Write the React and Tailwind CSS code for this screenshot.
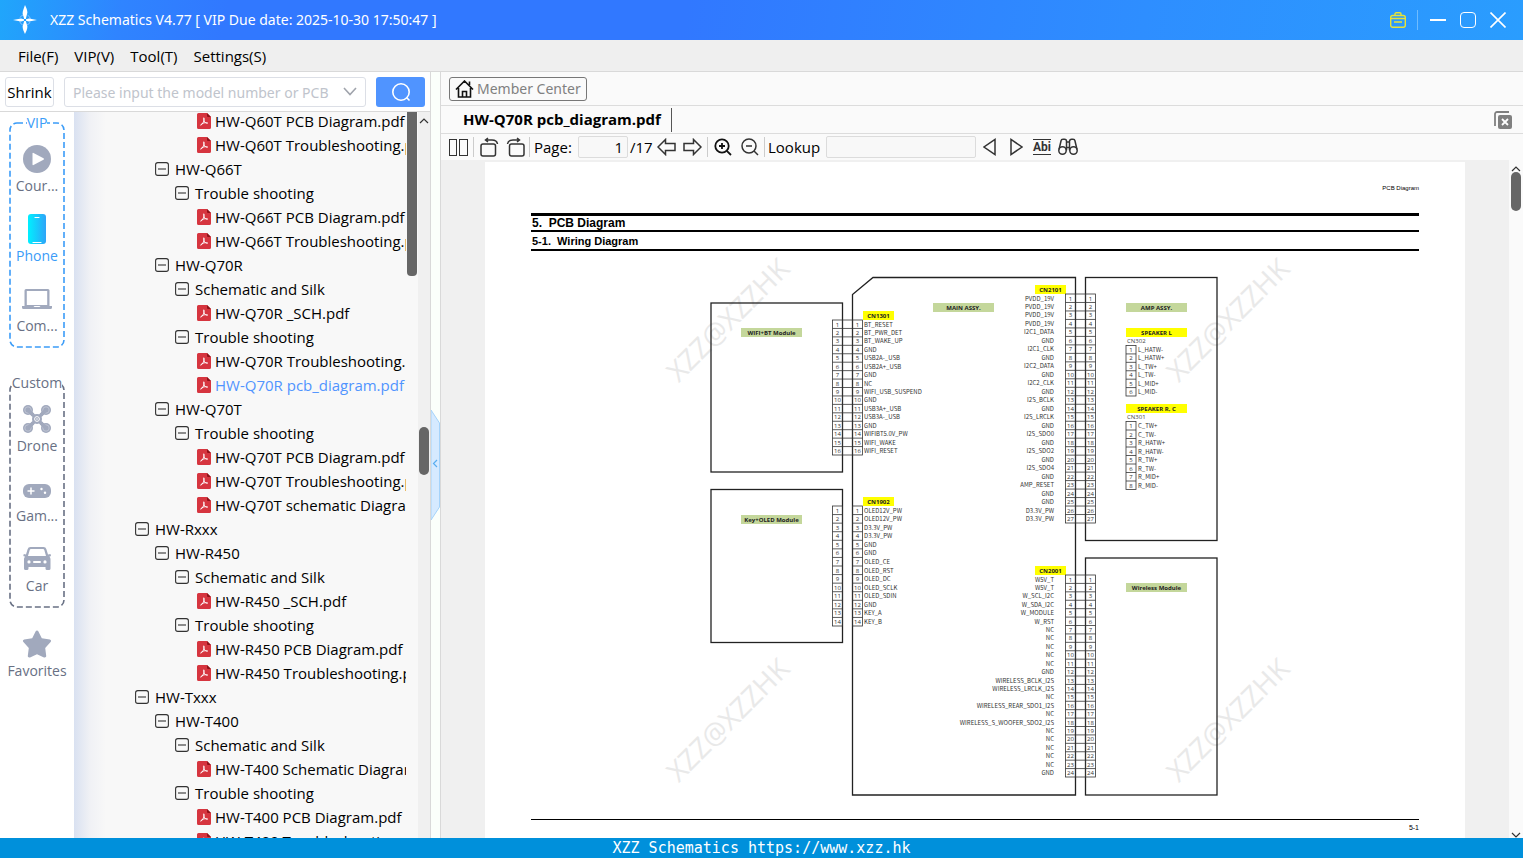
import { useState } from 'react';

const TREE = [
  { depth: 3, name: 'HW-Q60T PCB Diagram.pdf', file: true },
  { depth: 3, name: 'HW-Q60T Troubleshooting.pdf', file: true },
  { depth: 1, name: 'HW-Q66T' },
  { depth: 2, name: 'Trouble shooting' },
  { depth: 3, name: 'HW-Q66T PCB Diagram.pdf', file: true },
  { depth: 3, name: 'HW-Q66T Troubleshooting.pdf', file: true },
  { depth: 1, name: 'HW-Q70R' },
  { depth: 2, name: 'Schematic and Silk' },
  { depth: 3, name: 'HW-Q70R _SCH.pdf', file: true },
  { depth: 2, name: 'Trouble shooting' },
  { depth: 3, name: 'HW-Q70R Troubleshooting.pdf', file: true },
  { depth: 3, name: 'HW-Q70R pcb_diagram.pdf', file: true },
  { depth: 1, name: 'HW-Q70T' },
  { depth: 2, name: 'Trouble shooting' },
  { depth: 3, name: 'HW-Q70T PCB Diagram.pdf', file: true },
  { depth: 3, name: 'HW-Q70T Troubleshooting.pdf', file: true },
  { depth: 3, name: 'HW-Q70T schematic Diagram.pdf', file: true },
  { depth: 0, name: 'HW-Rxxx' },
  { depth: 1, name: 'HW-R450' },
  { depth: 2, name: 'Schematic and Silk' },
  { depth: 3, name: 'HW-R450 _SCH.pdf', file: true },
  { depth: 2, name: 'Trouble shooting' },
  { depth: 3, name: 'HW-R450 PCB Diagram.pdf', file: true },
  { depth: 3, name: 'HW-R450 Troubleshooting.pdf', file: true },
  { depth: 0, name: 'HW-Txxx' },
  { depth: 1, name: 'HW-T400' },
  { depth: 2, name: 'Schematic and Silk' },
  { depth: 3, name: 'HW-T400 Schematic Diagram.pdf', file: true },
  { depth: 2, name: 'Trouble shooting' },
  { depth: 3, name: 'HW-T400 PCB Diagram.pdf', file: true },
  { depth: 3, name: 'HW-T400 Troubleshooting.pdf', file: true },
];

const INDENT = ['pl-[61px]', 'pl-[81px]', 'pl-[101px]', 'pl-[123px]'];

const CN1301 = ['BT_RESET', 'BT_PWR_DET', 'BT_WAKE_UP', 'GND', 'USB2A-_USB', 'USB2A+_USB', 'GND', 'NC', 'WIFI_USB_SUSPEND', 'GND', 'USB3A+_USB', 'USB3A-_USB', 'GND', 'WIFIBT5.0V_PW', 'WIFI_WAKE', 'WIFI_RESET'];
const CN1902 = ['OLED12V_PW', 'OLED12V_PW', 'D3.3V_PW', 'D3.3V_PW', 'GND', 'GND', 'OLED_CE', 'OLED_RST', 'OLED_DC', 'OLED_SCLK', 'OLED_SDIN', 'GND', 'KEY_A', 'KEY_B'];
const CN2101 = ['PVDD_19V', 'PVDD_19V', 'PVDD_19V', 'PVDD_19V', 'I2C1_DATA', 'GND', 'I2C1_CLK', 'GND', 'I2C2_DATA', 'GND', 'I2C2_CLK', 'GND', 'I2S_BCLK', 'GND', 'I2S_LRCLK', 'GND', 'I2S_SDO0', 'GND', 'I2S_SDO2', 'GND', 'I2S_SDO4', 'GND', 'AMP_RESET', 'GND', 'GND', 'D3.3V_PW', 'D3.3V_PW'];
const CN2001 = ['W5V_T', 'W5V_T', 'W_SCL_I2C', 'W_SDA_I2C', 'W_MODULE', 'W_RST', 'NC', 'NC', 'NC', 'NC', 'NC', 'GND', 'WIRELESS_BCLK_I2S', 'WIRELESS_LRCLK_I2S', 'NC', 'WIRELESS_REAR_SDO1_I2S', 'NC', 'WIRELESS_S_WOOFER_SDO2_I2S', 'NC', 'NC', 'NC', 'NC', 'NC', 'GND'];
const CN302 = ['L_HATW-', 'L_HATW+', 'L_TW+', 'L_TW-', 'L_MID+', 'L_MID-'];
const CN301 = ['C_TW+', 'C_TW-', 'R_HATW+', 'R_HATW-', 'R_TW+', 'R_TW-', 'R_MID+', 'R_MID-'];

function LogoIcon() {
  return (
    <svg width="24" height="30" viewBox="0 0 24 30" fill="#fff">
      <circle cx="12" cy="15" r="5.500" fill="none" stroke="#8cc4ff" strokeWidth="1" strokeDasharray="5 3.640" strokeDashoffset="-2" />
      <path d="M12 0c1 2 2.400 5 2.400 7.500L12.800 14h-1.600L9.600 8.500C9.600 6 11 3 12 0zM12 29c1-2 2.400-5 2.400-7.500L12.800 16h-1.600l-1.600 5.500C9.600 24 11 27 12 29z" />
      <path d="M0 15l8-1.500 3 .8v1.400l-3 .8zM24 15l-8-1.500-3 .8v1.400l3 .8z" />
    </svg>
  );
}

function PdfIcon() {
  return (
    <svg className="shrink-0" width="14" height="16" viewBox="0 0 14 16">
      <path d="M1.500 0H10l4 4v10.500a1.500 1.500 0 0 1-1.500 1.500h-11A1.500 1.500 0 0 1 0 14.500v-13A1.500 1.500 0 0 1 1.500 0z" fill="#d6353f" />
      <path d="M10 0l4 4h-3a1 1 0 0 1-1-1z" fill="#8e1219" />
      <path d="M6.800 4.800c.5 0 .5 1.800 0 3.200-.9 2.300-2.400 4.400-3.200 4.200.3-1 1.800-1.900 3.400-2.300 1.700-.4 3.400-.4 3.700.2-.8.5-2.200 0-3-1.200-1.100-1.400-1.500-4.100-.9-4.100z" fill="none" stroke="#fff" strokeWidth=".9" />
    </svg>
  );
}

function MinusBox() {
  return (
    <svg className="shrink-0" width="14" height="14" viewBox="0 0 14 14" fill="none" stroke="#333" strokeWidth="1.100">
      <rect x=".6" y=".6" width="12.800" height="12.800" rx="2.200" />
      <path d="M3 7h8" />
    </svg>
  );
}

function CoursesIcon() {
  return (
    <svg width="28" height="28" viewBox="0 0 28 28">
      <circle cx="14" cy="14" r="14" fill="#a1a9bd" />
      <path d="M9.500 8.500v11a.7.7 0 0 0 1 .6l10-5.400a.8.8 0 0 0 0-1.400l-10-5.400a.7.7 0 0 0-1 .6z" fill="#fff" />
    </svg>
  );
}

function PhoneIcon() {
  return (
    <svg width="18" height="30" viewBox="0 0 18 30">
      <defs>
        <linearGradient id="phone" x1="0" y1="0" x2="1" y2="0">
          <stop offset="0" stopColor="#00f0ff" />
          <stop offset="1" stopColor="#2ea4f8" />
        </linearGradient>
      </defs>
      <rect width="18" height="30" rx="3" fill="url(#phone)" />
      <path d="M7 3.500h4M5 28.500h8" stroke="#fff" strokeWidth="1.200" strokeLinecap="round" />
    </svg>
  );
}

function ComputerIcon() {
  return (
    <svg width="30" height="22" viewBox="0 0 30 22" fill="#a1a9bd">
      <path fillRule="evenodd" d="M4 1h22a1.500 1.500 0 0 1 1.500 1.500V18h-25V2.500A1.500 1.500 0 0 1 4 1zM4.800 3v14h20.400V3z" />
      <path d="M0 18h11.500l1 1h5l1-1H30v1.500a1.500 1.500 0 0 1-1.500 1.500h-27A1.500 1.500 0 0 1 0 19.500z" />
    </svg>
  );
}

function DroneIcon() {
  return (
    <svg width="28" height="28" viewBox="0 0 28 28">
      <path d="M5.500 5.500l17 17M22.500 5.500l-17 17" stroke="#a1a9bd" strokeWidth="3.400" />
      <circle cx="14" cy="14" r="5" fill="#a1a9bd" />
      {[[5, 5], [23, 5], [5, 23], [23, 23]].map(([x, y]) => (
        <g key={`${x}-${y}`}>
          <circle cx={x} cy={y} r="5" fill="#a1a9bd" />
          <circle cx={x} cy={y} r="3.200" fill="none" stroke="#c5cad8" strokeWidth=".8" />
        </g>
      ))}
      <path d="M5 5l5 5M23 5l-5 5M5 23l5-5M23 23l-5-5" stroke="#a1a9bd" strokeWidth="3.400" />
      <circle cx="14" cy="14" r="2.400" fill="none" stroke="#fff" strokeWidth="1" />
      <circle cx="14" cy="14" r=".8" fill="#fff" />
    </svg>
  );
}

function GameIcon() {
  return (
    <svg width="28" height="18" viewBox="0 -4 28 18">
      <rect width="28" height="14" rx="6" fill="#a1a9bd" />
      <path d="M8 3.500v7M4.500 7h7" stroke="#fff" strokeWidth="1.500" />
      <circle cx="18.500" cy="5" r="1.200" fill="#fff" />
      <circle cx="22" cy="8.800" r="1.200" fill="#fff" />
    </svg>
  );
}

function CarIcon() {
  return (
    <svg width="28" height="23" viewBox="0 0 28 23" fill="#a1a9bd">
      <path
        fillRule="evenodd"
        d="M7.500 0h13a3 3 0 0 1 2.900 2.200L25 7.500l2.500-.5.5 2-1.700.8c1 .8 1.200 1.700 1.200 2.700v9a1.500 1.500 0 0 1-1.500 1.500h-2a1.500 1.500 0 0 1-1.500-1.500V20h-17v1.500A1.500 1.500 0 0 1 4 23H2.500A1.500 1.500 0 0 1 1 21.500v-9c0-1 .2-1.900 1.200-2.700L.3 9l.5-2L3 7.500l1.600-5.300A3 3 0 0 1 7.500 0zM8 2a1.400 1.400 0 0 0-1.300 1L5 9h18l-1.700-6A1.400 1.400 0 0 0 20 2zM6 13.300a1.600 1.600 0 1 0 0 3.200 1.600 1.600 0 0 0 0-3.200zM22 13.300a1.600 1.600 0 1 0 0 3.200 1.600 1.600 0 0 0 0-3.200zM11 14a1 1 0 0 0 0 2h6a1 1 0 0 0 0-2z"
      />
    </svg>
  );
}

function StarIcon() {
  return (
    <svg width="30" height="30" viewBox="0 -1 30 30" fill="#a1a9bd">
      <path d="M13.700 1.200a1.500 1.500 0 0 1 2.600 0l3.500 7 8 1.400c1.300.3 1.700 1.600.8 2.500l-5.400 6 1 7.700c.2 1.300-1 2.100-2.200 1.600L15 24.200l-7 3.200c-1.200.5-2.400-.3-2.200-1.600l1-7.700-5.400-6c-.9-.9-.5-2.200.8-2.500l8-1.400z" />
    </svg>
  );
}

function NavItem({ icon, label, active, onClick }) {
  return (
    <button type="button" onClick={onClick} className="flex h-[70px] w-full flex-col items-center">
      <span className="flex h-10 items-center justify-center pt-px">{icon}</span>
      <span className={`text-[14px] leading-4 whitespace-nowrap ${active ? 'text-[#3b9cf8]' : 'text-[#687084]'}`}>{label}</span>
    </button>
  );
}

function NavGroup({ title, color, className, children }) {
  return (
    <section className={`relative mx-2 pt-4 ${className}`}>
      <svg className="absolute inset-0 h-full w-full overflow-visible" fill="none">
        <rect x="2" y="1" width="54" height="224" rx="7" stroke={color} strokeWidth="1.600" strokeDasharray="6 3" />
      </svg>
      <h2 className="absolute inset-x-0 -top-2 flex justify-center text-[14px] leading-[18px]" style={{ color }}>
        <span className="bg-white">{title}</span>
      </h2>
      <div className="relative">{children}</div>
    </section>
  );
}

function Grid({ x, top, bottom, n, w = 10 }) {
  const h = (bottom - top) / n;
  return (
    <g>
      <g stroke="#333" strokeWidth=".8" fill="none">
        <rect x={x} y={top} width={w} height={bottom - top} />
        {Array.from({ length: n - 1 }, (_, i) => (
          <path key={i} d={`M${x} ${top + h * (i + 1)}h${w}`} />
        ))}
      </g>
      {Array.from({ length: n }, (_, i) => (
        <text key={i} x={x + w / 2} y={top + h * i + 6.5} textAnchor="middle" fill="#333">{i + 1}</text>
      ))}
    </g>
  );
}

// horizontal wires between two facing connectors
function Wires({ x, w, top, bottom, n }) {
  const h = (bottom - top) / n;
  return (
    <g stroke="#333" strokeWidth=".8">
      {Array.from({ length: n + 1 }, (_, i) => (
        <path key={i} d={`M${x} ${top + h * i}h${w}`} />
      ))}
    </g>
  );
}

function Pins({ x, top, bottom, names, end }) {
  const h = (bottom - top) / names.length;
  return (
    <g fontFamily='"Noto Sans CJK SC", sans-serif' fill="#333">
      {names.map((name, i) => (
        <text key={i} x={x} y={top + h * i + 6.5} textAnchor={end ? 'end' : 'start'}>{name}</text>
      ))}
    </g>
  );
}

function Tag({ x, y, w, color, children }) {
  return (
    <g>
      <rect x={x} y={y} width={w} height="9" fill={color} />
      <text x={x + w / 2} y={y + 6.5} textAnchor="middle" fontWeight="700" fill="#222">{children}</text>
    </g>
  );
}

function WiringDiagram() {
  return (
    <svg className="block w-full" viewBox="531 251 888 568" fontSize="6" fontFamily='"Open Sans", sans-serif' role="img" aria-label="Wiring Diagram">
      <g fill="#e9e9e9" fontSize="28" fontFamily='"Open Sans", sans-serif' textAnchor="middle">
        {[[735, 327], [1235, 327], [735, 727], [1235, 727]].map(([x, y]) => (
          <text key={`${x}-${y}`} transform={`translate(${x} ${y}) rotate(-45)`}>XZZ@XZZHK</text>
        ))}
      </g>

      <g fill="none" stroke="#222" strokeWidth="1.300">
        <rect x="711" y="303" width="131.500" height="169" />
        <rect x="711" y="489.500" width="131.500" height="153" />
        <path d="M873 277.500h202.500V795h-223V294.500z" />
        <rect x="1085.500" y="277.500" width="131.500" height="263" />
        <rect x="1085.500" y="558" width="131.500" height="237" />
      </g>

      <Tag x={741} y={328} w={61} color="#c4d79b">WIFI+BT Module</Tag>
      <Tag x={741} y={515} w={61} color="#c4d79b">Key+OLED Module</Tag>
      <Tag x={933} y={303} w={61} color="#c4d79b">MAIN ASSY.</Tag>
      <Tag x={1126} y={303} w={61} color="#c4d79b">AMP ASSY.</Tag>
      <Tag x={1126} y={583} w={61} color="#c4d79b">Wireless Module</Tag>
      <Tag x={1126} y={328} w={61} color="#ff0">SPEAKER L</Tag>
      <Tag x={1126} y={404} w={61} color="#ff0">SPEAKER R, C</Tag>
      <Tag x={863} y={311} w={31} color="#ff0">CN1301</Tag>
      <Tag x={863} y={497} w={31} color="#ff0">CN1902</Tag>
      <Tag x={1035} y={285} w={31} color="#ff0">CN2101</Tag>
      <Tag x={1035} y={566} w={31} color="#ff0">CN2001</Tag>

      <Grid x={832.500} top={320} bottom={455} n={16} />
      <Wires x={842.500} w={10} top={320} bottom={455} n={16} />
      <Grid x={852.500} top={320} bottom={455} n={16} />
      <Pins x={864} top={320} bottom={455} names={CN1301} />

      <Grid x={832.500} top={506} bottom={626} n={14} />
      <Grid x={852.500} top={506} bottom={626} n={14} />
      <Pins x={864} top={506} bottom={626} names={CN1902} />

      <Grid x={1065.500} top={294} bottom={523} n={27} />
      <Wires x={1075.500} w={10} top={294} bottom={523} n={27} />
      <Grid x={1085.500} top={294} bottom={523} n={27} />
      <Pins x={1054} top={294} bottom={523} names={CN2101} end />

      <Grid x={1065.500} top={575} bottom={777} n={24} />
      <Wires x={1075.500} w={10} top={575} bottom={777} n={24} />
      <Grid x={1085.500} top={575} bottom={777} n={24} />
      <Pins x={1054} top={575} bottom={777} names={CN2001} end />

      <text x="1127" y="343" fill="#444">CN302</text>
      <Grid x={1126} top={345.500} bottom={396} n={6} />
      <Pins x={1138} top={345.500} bottom={396} names={CN302} />
      <text x="1127" y="419" fill="#444">CN301</text>
      <Grid x={1126} top={421.500} bottom={489.500} n={8} />
      <Pins x={1138} top={421.500} bottom={489.500} names={CN301} />
    </svg>
  );
}

function TitleBar() {
  return (
    <header className="flex h-10 shrink-0 items-center bg-[linear-gradient(100deg,#20a6fb_0%,#2f84ff_8%,#3178ff_15%,#3178ff_45%,#2e8eff_75%,#2a9dfe_100%)] pr-[17px] pl-[13px] text-white">
      <LogoIcon />
      <h1 className="ml-[13px] font-['Noto_Sans',sans-serif] text-[14px] leading-5 whitespace-pre">XZZ Schematics V4.77 [ VIP Due date: 2025-10-30 17:50:47 ]</h1>
      <div className="ml-auto flex items-center">
        <button type="button" aria-label="Toolbox">
          <svg width="16" height="16" viewBox="0 0 16 16" fill="none" stroke="#e8e337" strokeWidth="1.400">
            <rect x=".7" y="3.500" width="14.600" height="11.800" rx="2" />
            <path d="M5 3.500V2a1.200 1.200 0 0 1 1.200-1.200h3.600A1.200 1.200 0 0 1 11 2v1.500M1 6.500h14M4 10h8" />
          </svg>
        </button>
        <span className="mx-[11px] h-5 w-px bg-[#6fbcff]" />
        <button type="button" aria-label="Minimize" className="mx-px flex h-4 w-4 items-center">
          <span className="h-[2px] w-full bg-white" />
        </button>
        <button type="button" aria-label="Maximize" className="ml-[13px] h-4 w-4 rounded-[4px] border border-white" />
        <button type="button" aria-label="Close" className="ml-[14px]">
          <svg width="16" height="16" viewBox="0 0 16 16" stroke="#fff" strokeWidth="1.600"><path d="M.5.5l15 15M15.500.5l-15 15" /></svg>
        </button>
      </div>
    </header>
  );
}

function Chevron({ up }) {
  return (
    <svg width="10" height="6" viewBox="0 0 10 6" fill="none" stroke="#333" strokeWidth="1.200">
      <path d={up ? 'M1 5l4-4 4 4' : 'M1 1l4 4 4-4'} />
    </svg>
  );
}

function Tree({ selected, onSelect }) {
  return (
    <ul className="-mt-[3px] min-w-0 flex-1 overflow-hidden">
      {TREE.map((node, i) => {
        const active = node.name === selected;
        return (
          <li key={i} className={`h-6 ${INDENT[node.depth]}`}>
            <button
              type="button"
              onClick={() => node.file && onSelect(node.name)}
              className={`flex h-6 items-center text-[15px] leading-6 whitespace-nowrap ${node.file ? 'gap-1' : 'gap-[6px]'} ${active ? 'text-[#5094ff]' : 'text-black'}`}
            >
              {node.file ? <PdfIcon /> : <MinusBox />}
              {node.name}
            </button>
          </li>
        );
      })}
    </ul>
  );
}

function Toolbar() {
  const [page, setPage] = useState('1');
  const [lookup, setLookup] = useState('');
  const stroke = { fill: 'none', stroke: '#333', strokeWidth: 1.5 };
  return (
    <div className="flex h-[26px] shrink-0 items-center bg-[#fafafa] pl-2 text-[15px] leading-6">
      <button type="button" aria-label="Two pages">
        <svg width="19" height="18" viewBox="0 0 19 18" {...stroke} strokeWidth="1"><rect x=".5" y="1.500" width="7" height="16" /><rect x="10.500" y="1.500" width="8" height="16" /></svg>
      </button>
      <span className="mx-[5px] h-5 w-px bg-[#ccc]" />
      <button type="button" aria-label="Rotate left" className="ml-px">
        <svg width="19" height="20" viewBox="0 0 19 20" {...stroke}><rect x="1" y="7" width="14.500" height="12" rx="2" /><path d="M8 1L5.500 3 8 5M6 3h6c3 0 5 1 5.500 4" /></svg>
      </button>
      <button type="button" aria-label="Rotate right" className="ml-[7px]">
        <svg width="19" height="20" viewBox="0 0 19 20" {...stroke}><rect x="3.500" y="7" width="14.500" height="12" rx="2" /><path d="M11 1l2.500 2L11 5M13 3H7C4 3 2 4 1.500 7" /></svg>
      </button>
      <span className="mx-[4px] h-5 w-px bg-[#ccc]" />
      <label htmlFor="page" className="w-11">Page:</label>
      <input id="page" value={page} onChange={(e) => setPage(e.target.value)} className="h-[22px] w-[50px] rounded-[2px] border border-[#dcdcdc] bg-[#f8f8f8] pr-1 text-right" />
      <span className="ml-[2px] w-[27px]">/17</span>
      <button type="button" aria-label="Previous page">
        <svg width="19" height="18" viewBox="0 0 19 18" {...stroke}><path d="M1 9l7.500-7.500v4H18v7H8.500v4z" /></svg>
      </button>
      <button type="button" aria-label="Next page" className="ml-[7px]">
        <svg width="19" height="18" viewBox="0 0 19 18" {...stroke}><path d="M18 9l-7.500-7.500v4H1v7h9.500v4z" /></svg>
      </button>
      <span className="mr-[6px] ml-[5px] h-5 w-px bg-[#ccc]" />
      <button type="button" aria-label="Zoom in">
        <svg width="18" height="18" viewBox="0 0 18 18" {...stroke} stroke="#111" strokeWidth="1.800"><circle cx="8" cy="8" r="6.700" /><path d="M12.800 12.800L17 17M5 8h6M8 5v6" /></svg>
      </button>
      <button type="button" aria-label="Zoom out" className="ml-[9px]">
        <svg width="18" height="18" viewBox="0 0 18 18" {...stroke}><circle cx="8" cy="8" r="7" /><path d="M13 13l4 4M5 8h6" /></svg>
      </button>
      <span className="mr-[3px] ml-[5px] h-5 w-px bg-[#ccc]" />
      <label htmlFor="lookup" className="w-[58px]">Lookup</label>
      <input id="lookup" value={lookup} onChange={(e) => setLookup(e.target.value)} className="h-[22px] w-[150px] rounded-[2px] border border-[#dcdcdc] bg-[#f8f8f8] px-1" />
      <button type="button" aria-label="Find previous" className="ml-[7px]">
        <svg width="13" height="18" viewBox="0 0 13 18" {...stroke}><path d="M12 1.500v15L1 9z" /></svg>
      </button>
      <button type="button" aria-label="Find next" className="ml-[14px]">
        <svg width="13" height="18" viewBox="0 0 13 18" {...stroke}><path d="M1 1.500v15L12 9z" /></svg>
      </button>
      <button type="button" className="ml-[10px] h-4 w-[18px] border-y border-[#333] font-['Roboto',sans-serif] text-[12px] leading-[14px] font-bold text-[#333]">Abi</button>
      <button type="button" aria-label="Search document" className="ml-[7px]">
        <svg width="20" height="18" viewBox="0 0 20 18" {...stroke}>
          <circle cx="4.500" cy="12.500" r="3.700" /><circle cx="15.500" cy="12.500" r="3.700" />
          <path d="M1 11.500L3 3a2 2 0 0 1 2-1.700h1.500A2 2 0 0 1 8.500 3.300v9M19 11.500L17 3a2 2 0 0 0-2-1.700h-1.500a2 2 0 0 0-2 2v9M8.500 4h3M8.500 9.500h3" />
        </svg>
      </button>
    </div>
  );
}

function DocumentPage() {
  return (
    <article className="bg-white px-[46px] pt-[22px] pb-10 font-['Liberation_Sans',Arial,sans-serif] text-black">
      <p className="text-right text-[6px] leading-[8px]">PCB Diagram</p>
      <h2 className="mt-[21px] border-t-[3px] border-black pl-px text-[12px] leading-[14px] font-bold">5.&nbsp; PCB Diagram</h2>
      <h3 className="border-t-2 border-b-2 border-black pt-px pl-px text-[11px] leading-4 font-bold">5-1.&nbsp; Wiring Diagram</h3>
      <WiringDiagram />
      <p className="border-t border-black pt-1 text-right text-[7px] leading-[8px]">5-1</p>
    </article>
  );
}

export default function App() {
  const [section, setSection] = useState('Phone');
  const [query, setQuery] = useState('');
  const [selected, setSelected] = useState('HW-Q70R pcb_diagram.pdf');
  const nav = (name, label, icon) => (
    <NavItem icon={icon} label={label} active={section === name} onClick={() => setSection(name)} />
  );

  return (
    <div className="flex h-screen flex-col overflow-hidden bg-white font-['Open_Sans','Noto_Sans',sans-serif] text-black">
      <TitleBar />
      <nav className="flex h-8 shrink-0 items-center gap-4 border-b border-[#d9d9d9] bg-[#efefef] pl-[18px] text-[15px] leading-6">
        <button type="button">File(F)</button>
        <button type="button">VIP(V)</button>
        <button type="button">Tool(T)</button>
        <button type="button">Settings(S)</button>
      </nav>

      <div className="flex min-h-0 flex-1">
        <div className="flex w-[431px] shrink-0 flex-col border-r border-[#d9d9d9]">
          <div className="flex h-10 shrink-0 items-center border-b border-[#d9d9d9] px-[5px] text-[15px]">
            <button type="button" className="flex h-[30px] w-[49px] items-center justify-center rounded-[3px] border border-[#dcdfe6] pt-px">Shrink</button>
            <div className="ml-[10px] flex h-[30px] min-w-0 flex-1 items-center rounded-[3px] border border-[#dcdfe6] px-2">
              <input
                aria-label="Model number"
                value={query}
                onChange={(e) => setQuery(e.target.value)}
                placeholder="Please input the model number or PCB"
                className="min-w-0 flex-1 pt-px font-['Noto_Sans',sans-serif] text-[14px] outline-none placeholder:text-[#c0c4cc]"
              />
              <button type="button" aria-label="Show history">
                <svg width="14" height="9" viewBox="0 0 14 9" fill="none" stroke="#a0a4ac" strokeWidth="1.600"><path d="M1 1l6 6.500L13 1" /></svg>
              </button>
            </div>
            <button type="button" aria-label="Search" className="ml-[10px] flex h-[30px] w-[49px] items-center justify-center rounded-[3px] bg-[#5094ff]">
              <svg width="20" height="20" viewBox="0 0 20 20" fill="none" stroke="#fff" strokeWidth="1.600"><circle cx="10" cy="10" r="8.200" /><path d="M15.500 15.500L18.500 18.500" /></svg>
            </button>
          </div>

          <div className="flex min-h-0 flex-1">
            <aside className="w-[74px] shrink-0 pt-[10px]">
              <NavGroup title="VIP" color="#3b9cf8" className="">
                {nav('Courses', 'Cour...', <CoursesIcon />)}
                {nav('Phone', 'Phone', <PhoneIcon />)}
                {nav('Computer', 'Com...', <ComputerIcon />)}
              </NavGroup>
              <NavGroup title="Custom" color="#687084" className="mt-[34px]">
                {nav('Drone', 'Drone', <DroneIcon />)}
                {nav('Game', 'Gam...', <GameIcon />)}
                {nav('Car', 'Car', <CarIcon />)}
              </NavGroup>
              <div className="mt-[15px]">{nav('Favorites', 'Favorites', <StarIcon />)}</div>
            </aside>
            <div className="flex min-w-0 flex-1 overflow-hidden bg-[#f8f8f8] bg-[linear-gradient(90deg,#d9e1f1_0px,#f0f1f5_16px,#f8f8f8_32px)]">
              <Tree selected={selected} onSelect={setSelected} />
              <div className="ml-px w-[11px] shrink-0"><div className="h-[164px] w-[10px] rounded-b-[4px] bg-[#666]" /></div>
            </div>
            <div className="flex w-3 shrink-0 flex-col items-center bg-[#f0f0f0] pt-[6px]">
              <Chevron up />
              <div className="mt-[303px] h-12 w-[10px] rounded-full bg-[#666]" />
            </div>
          </div>
        </div>

        <div className="flex w-[10px] shrink-0 flex-col border-r border-[#d9d9d9] bg-[#fbfffb] pt-[338px]">
          <button type="button" aria-label="Collapse panel">
            <svg width="9" height="110" viewBox="0 0 9 110" fill="none">
              <path d="M0 0l8.500 13v84L0 110z" fill="#d6eaff" stroke="#a5d3fa" />
              <path d="M6 50l-3.500 3.500L6 57" stroke="#5aaef0" strokeWidth="1.200" />
            </svg>
          </button>
        </div>

        <main className="flex min-w-0 flex-1 flex-col bg-[#fafafa]">
          <div className="flex h-[34px] shrink-0 items-center border-b border-[#dcdcdc] pl-2">
            <button type="button" className="flex h-6 items-center gap-[3px] rounded-[3px] border border-[#777] px-[5px] font-['Noto_Sans',sans-serif] text-[14px] leading-5 text-[#808080]">
              <svg width="19" height="18" viewBox="0 0 19 18" fill="none" stroke="#111" strokeWidth="1.600"><path d="M1 9.500L9.500 1 18 9.500M3.500 8v9h12V8M7.500 17v-5.500h4V17M14.500 5V1.500" /></svg>
              Member Center
            </button>
          </div>
          <div className="flex h-7 shrink-0 items-center border-b border-[#dcdcdc] pr-[11px]">
            <button type="button" className="h-6 border-r border-[#555] pr-[10px] pl-[22px] text-[15px] leading-[22px] font-bold"><span className="block h-6">HW-Q70R pcb_diagram.pdf</span></button>
            <button type="button" aria-label="Close all tabs" className="ml-auto">
              <svg width="18" height="18" viewBox="0 0 18 18" fill="none">
                <path d="M1 15V3a2 2 0 0 1 2-2h12" stroke="#808080" strokeWidth="1.800" />
                <rect x="4" y="4" width="14" height="14" rx="2" fill="#808080" />
                <path d="M8 8l6 6M14 8l-6 6" stroke="#fff" strokeWidth="1.800" />
              </svg>
            </button>
          </div>
          <Toolbar />
          <div className="flex min-h-0 flex-1">
            <div className="min-w-0 flex-1 overflow-hidden bg-[#f0f0f0] px-11 pt-[2px]">
              <DocumentPage />
            </div>
            <div className="flex w-[14px] shrink-0 flex-col items-center pt-[6px]">
              <Chevron up />
              <div className="h-[39px] w-[10px] rounded-full bg-[#666]" />
              <div className="mt-auto"><Chevron /></div>
            </div>
          </div>
        </main>
      </div>

      <footer className="h-5 shrink-0 bg-[#0090db] text-center font-['DejaVu_Sans_Mono',monospace] text-[15px] leading-5 text-white">
        XZZ Schematics https://www.xzz.hk
      </footer>
    </div>
  );
}
